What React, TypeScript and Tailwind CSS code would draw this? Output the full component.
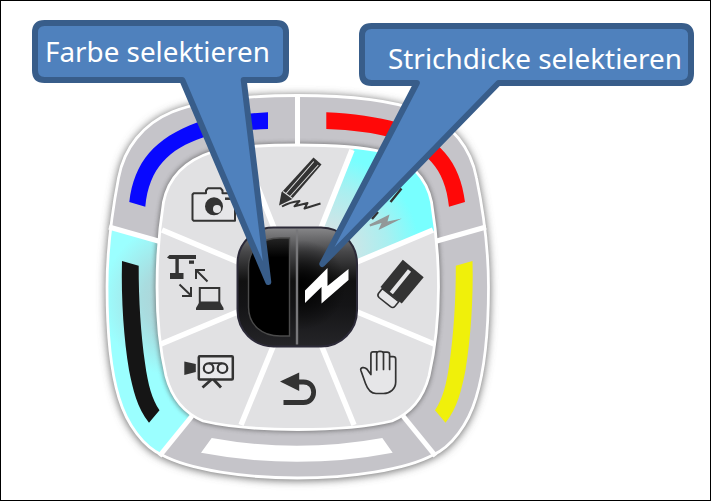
import React from "react";

const OUTER =
  "M297.5 95.5 C250 95.5 205 99 172 112 C143 124 124 148 118.5 178 C113 207 107 245 107 287 C107 330 111 372 119 398 C127 425 144 447 162 455 C190 470 245 478 297.5 478 C350 478 405 470 433 455 C451 447 468 425 476 398 C484 372 488.5 330 488.5 287 C488.5 245 482.5 207 476.5 178 C471 148 452 124 423 112 C390 99 345 95.5 297.5 95.5 Z";
const INNER =
  "M297.5 145 C265 145 232 147 212 152 C181 162 168 180 163.5 202 C159 230 157 262 157 287 C157 318 160 350 166 376 C172 399 184 413 203 421 C228 427 265 429.5 297.5 429.5 C330 429.5 367 427 392 421 C411 413 423 399 429 376 C435 350 438.5 318 438.5 287 C438.5 262 436 230 431.5 202 C427 180 414 162 383 152 C363 147 330 145 297.5 145 Z";

const CORNER_BAR =
  "M129.3 202 C134 162 155 138 197 122.5 C216 117 242 113.5 268 112.3 V129 C242 130 219 133 203 137.5 C169 149 149 168 145.3 206.7 Z";
const SIDE_BAR =
  "M122 261 L138.7 265.8 C138.5 300 141 335 145 363 C148 385 152 399 159.5 410.3 L149 422.7 C137 408 133 390 129 370 C124 340 121 300 122 261 Z";

// The eight segment dividers radiate from the hub.
const RAYS = [
  [162, 230], [243, 150], [352, 150], [433, 230],
  [434, 344], [354, 425], [241, 425], [161, 344],
];

function Ring() {
  return (
    <g>
      <path d={OUTER} fill="#666" stroke="#666" strokeWidth="3" filter="url(#soft)" transform="translate(0 1)" />
      <path d={OUTER} fill="#c5c4c9" />
      <g clipPath="url(#outerClip)">
        <path d="M90 221 L157 241 L175 330 L190 416 L150 467 L90 440Z" fill="url(#cyanRing)" />
        <path d={INNER} fill="none" stroke="#555" strokeWidth="5" filter="url(#softSmall)" opacity=".6" />
      </g>
      <path d={OUTER} fill="none" stroke="#fff" strokeWidth="2.8" />
      <g stroke="#fff" strokeWidth="5">
        <path d="M297.5 96V145" />
        <path d="M109 227L160 241.5" />
        <path d="M486 227L435 241.5" />
        <path d="M159.5 456L192 416" />
        <path d="M435.5 456L403 416" />
      </g>
      <path d={CORNER_BAR} fill="#0808ff" />
      <path d={CORNER_BAR} fill="#ff0808" transform="translate(594.3 0) scale(-1 1)" />
      <path d={SIDE_BAR} fill="#151515" />
      <path d={SIDE_BAR} fill="#f0f00a" transform="translate(594.5 0) scale(-1 1)" />
      <path d="M211.7 438 Q297 453.5 382.3 438 L392.7 452.7 Q297 471 201 452.7Z" fill="#fff" />
    </g>
  );
}

function Segments() {
  return (
    <g>
      <path d={INNER} fill="#e1e1e3" />
      <g clipPath="url(#innerClip)">
        <path d="M297.5 287L360 134L450 134V224Z" fill="url(#cyanSegment)" />
        <g stroke="#fff" strokeWidth="5.5">
          {RAYS.map(([x, y]) => (
            <line key={`${x}-${y}`} x1="297.5" y1="287" x2={x} y2={y} />
          ))}
        </g>
      </g>
      <path d={INNER} fill="none" stroke="#fff" strokeWidth="2.8" />
    </g>
  );
}

function Hub() {
  return (
    <g>
      <rect x="237.5" y="227.5" width="119.5" height="119" rx="36" fill="url(#hub)" stroke="#2c2a38" strokeWidth="2" />
      <rect x="298" y="230" width="58" height="115" fill="url(#hubGlow)" clipPath="url(#hubClip)" />
      <path d="M289.5 238 H280 C260 238 248.5 250 248.5 268 V307 C248.5 325 262 336 280 336 H289.5Z" fill="url(#well)" stroke="#4b4b4b" strokeWidth="1.4" />
      <path d="M297 229.5V344.5" stroke="#77777a" strokeWidth="2.4" />
      <path d="M305 290.5L327.5 268V286L348.5 269V280L321.5 303.5V287L305 303Z" fill="#fff" />
    </g>
  );
}

function Icons() {
  return (
    <g fill="none" stroke="#333" strokeWidth="2">
      {/* camera */}
      <path d="M193.7 193.2H206V190.5L208 188.2H220.5L222.5 190.5V193.2H235V220.8H193.7L192.5 219.5V194.5Z" fill="#e6e6e8" strokeLinejoin="round" />
      <circle cx="214" cy="206.3" r="9" fill="#333" stroke="none" />
      <circle cx="217" cy="209" r="4" fill="#e4e4e6" stroke="none" />
      <path d="M225 198.7H235" strokeWidth="2.5" />

      {/* pencil */}
      <path d="M313.5 157.5L321.5 164.5L291.5 199.5L279 205.5L281.5 192.5Z" fill="#333" stroke="none" />
      <path d="M313.8 161.5L286 193.5M318.3 165L290 196.5" stroke="#ddd" strokeWidth="1.1" />
      <path d="M283 191.5L292.5 198.5" stroke="#ddd" strokeWidth="1.1" />
      <path d="M282 206.5Q290 202 299.5 201L294.5 206.3L307.5 203L304.5 208.5L320.5 203.5" strokeWidth="2" strokeLinejoin="round" />

      {/* marker */}
      <path d="M401.5 188.5L390.5 202M378 212L372 219" strokeWidth="2.4" />
      <path d="M369.5 224.5L389.5 214.5L387.5 221.5L401.8 218.5L378.5 230L381.5 223L370 226.5Z" fill="#929898" stroke="none" />

      {/* document camera and laptop */}
      <g fill="#333" stroke="none">
        <path d="M167 257.5L169.5 255H196V259H169.5Z" />
        <rect x="189" y="260.5" width="5" height="3.3" />
        <rect x="175.4" y="258" width="3.4" height="16" />
        <rect x="170" y="273" width="13.5" height="6" />
        <path d="M199.5 302H220L223.5 308V310H196V308Z" />
      </g>
      <rect x="199.8" y="288" width="19.5" height="14.5" />
      <path d="M207.5 281.5L196.5 270.5M196 279V270H205" />
      <path d="M179.5 284.5L190.5 295M191 287V296H182" />

      {/* video camera */}
      <path d="M184.3 361.5L195.8 364V372L184.3 375Z" fill="#333" stroke="none" />
      <rect x="198.8" y="356.2" width="34" height="23.2" rx="1" strokeWidth="2.5" fill="#e9e9eb" />
      <circle cx="208.6" cy="368.2" r="4.8" strokeWidth="2.2" />
      <circle cx="222.5" cy="368.2" r="4.8" strokeWidth="2.2" />
      <path d="M209 363.2H222" strokeWidth="1.8" />
      <path d="M211.5 379.5L202.5 387.5M213.5 379.5L221 387.5" strokeWidth="2.8" />

      {/* undo */}
      <path d="M280 381.5L299.2 372.5V391Z" fill="#333" stroke="none" />
      <path d="M298 382H303.5C317 382 317 402.5 303.5 402.5H283.5" strokeWidth="4.8" />

      {/* eraser */}
      <path d="M402.8 259.8L423.7 277.3L401.8 303.5L380.5 287Z" fill="#333" stroke="none" />
      <path d="M409.5 270.5L391.3 293" stroke="#e6e6e8" strokeWidth="4" />
      <path d="M382.3 288.7L398.8 301.7L395 306.3Q393 308.5 390.5 306.7L379 297.5Q377 295.5 378.6 293.3Z" fill="#e6e6e8" strokeWidth="1.6" />

      {/* hand */}
      <path d="M370.9 374.5V354Q371 351.8 373 351.8H376.7V370V353.5Q377 351.3 380 351.3Q383.5 351.3 383.5 353.5V369.5V352.2H387Q389.6 352.2 389.6 354.5V369.5V356.7H393Q395.7 356.7 395.7 359V382C395.7 389 390 393.5 383.5 393.5H376C370.5 393.5 367.5 389 365.5 383.5L360.8 370.2C360 367.5 364 366.5 366.8 369Z" fill="#e6e6e8" strokeWidth="1.7" strokeLinejoin="round" />
    </g>
  );
}

function Callouts() {
  return (
    <g>
      <g fill="#4f81bd" stroke="#385d8a" strokeWidth="6" strokeLinejoin="round">
        <path d="M44.5 23H276.5Q286 23 286 32.5V70.5Q286 80 276.5 80H243.7L268.3 282L182.3 80H44.5Q35 80 35 70.5V32.5Q35 23 44.5 23Z" />
        <path d="M371.5 26H681.5Q691 26 691 35.5V73.5Q691 83 681.5 83H498.5L322.3 264L416.8 83H371.5Q362 83 362 73.5V35.5Q362 26 371.5 26Z" />
      </g>
      <g className="font-['Noto_Sans',sans-serif] text-[28px]" fill="#fff">
        <text x="45" y="62" textLength="225" lengthAdjust="spacingAndGlyphs">Farbe selektieren</text>
        <text x="388" y="69" textLength="294" lengthAdjust="spacingAndGlyphs">Strichdicke selektieren</text>
      </g>
    </g>
  );
}

export default function App() {
  return (
    <main className="h-[501px] w-[711px] overflow-hidden border border-black bg-white">
      <svg className="block h-[499px] w-[709px]" viewBox="1 1 709 499">
        <defs>
          <filter id="soft" x="-10%" y="-10%" width="120%" height="120%">
            <feGaussianBlur stdDeviation="4" />
          </filter>
          <filter id="softSmall" x="-10%" y="-10%" width="120%" height="120%">
            <feGaussianBlur stdDeviation="2" />
          </filter>
          <clipPath id="outerClip"><path d={OUTER} /></clipPath>
          <clipPath id="innerClip"><path d={INNER} /></clipPath>
          <clipPath id="hubClip"><rect x="238.5" y="228.5" width="117.5" height="117" rx="35" /></clipPath>
          <radialGradient id="cyanRing" gradientUnits="userSpaceOnUse" cx="180" cy="300" r="125">
            <stop offset="0" stopColor="#b4cccf" />
            <stop offset=".3" stopColor="#a9dcdf" />
            <stop offset=".62" stopColor="#9bffff" />
            <stop offset="1" stopColor="#9bffff" />
          </radialGradient>
          <radialGradient id="cyanSegment" gradientUnits="userSpaceOnUse" cx="325" cy="250" r="105">
            <stop offset=".2" stopColor="#d2e4e6" />
            <stop offset=".6" stopColor="#a9eff0" />
            <stop offset=".9" stopColor="#78ffff" />
          </radialGradient>
          <linearGradient id="hub" x1="0" y1="0" x2="0" y2="1">
            <stop offset="0" stopColor="#88888a" />
            <stop offset=".2" stopColor="#48484a" />
            <stop offset=".45" stopColor="#111" />
            <stop offset=".65" stopColor="#141416" />
            <stop offset="1" stopColor="#252528" />
          </linearGradient>
          <radialGradient id="hubGlow" gradientUnits="userSpaceOnUse" cx="301" cy="285" r="45">
            <stop offset="0" stopColor="#000" />
            <stop offset="1" stopColor="#000" stopOpacity="0" />
          </radialGradient>
          <linearGradient id="well" x1="0" y1="0" x2="0" y2="1">
            <stop offset="0" stopColor="#242424" />
            <stop offset=".2" stopColor="#000" />
          </linearGradient>
        </defs>
        <Ring />
        <Segments />
        <Icons />
        <Hub />
        <Callouts />
      </svg>
    </main>
  );
}
